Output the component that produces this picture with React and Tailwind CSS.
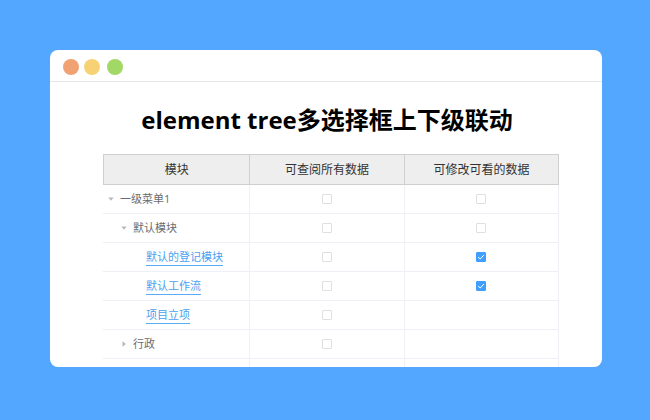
import { useState } from 'react';

const COLUMNS = ['模块', '可查阅所有数据', '可修改可看的数据'];

const INDENTS = ['pl-[5px]', 'pl-[18px]', 'pl-[31px]'];

const ROWS = [
  { id: 'menu', label: '一级菜单1', level: 0, caret: 'open', view: false, edit: false },
  { id: 'default', label: '默认模块', level: 1, caret: 'open', view: false, edit: false },
  { id: 'register', label: '默认的登记模块', level: 2, view: false, edit: true },
  { id: 'workflow', label: '默认工作流', level: 2, view: false, edit: true },
  { id: 'project', label: '项目立项', level: 2, view: false },
  { id: 'admin', label: '行政', level: 1, caret: 'closed', view: false },
];

function Caret({ open, label }) {
  return (
    <button className="flex w-3 shrink-0 cursor-pointer items-center" aria-label={label} aria-expanded={open}>
      <svg viewBox="0 0 6 6" className="size-[6px] fill-[#b4b8c0]">
        {open ? <path d="M0.3 1.5h5.4L3 4.8z" /> : <path d="M1.5 0.2v5.6L4.9 3z" />}
      </svg>
    </button>
  );
}

function Checkbox({ label, defaultChecked }) {
  const [checked, setChecked] = useState(defaultChecked);

  return (
    <label className="relative mx-auto block size-[10px] cursor-pointer">
      <input
        type="checkbox"
        checked={checked}
        onChange={(e) => setChecked(e.target.checked)}
        className="block size-[10px] cursor-pointer appearance-none rounded-[1px] border border-[#dfe0e4] bg-white checked:border-[#409eff] checked:bg-[#409eff]"
        aria-label={label}
      />
      {checked && (
        <svg viewBox="0 0 10 10" className="pointer-events-none absolute inset-0 size-[10px]" fill="none">
          <path d="M2.1 5 4.2 7 8 2.9" stroke="#fff" strokeWidth="1" />
        </svg>
      )}
    </label>
  );
}

function Row({ row }) {
  return (
    <tr className="h-[29px]">
      <td className="border-r border-b border-[#eef0f5]">
        <div className={`flex items-center ${INDENTS[row.level]}`}>
          {row.caret ? <Caret open={row.caret === 'open'} label={row.label} /> : <span className="w-3" />}
          {row.level === 2 ? (
            <a href="#" className="border-b border-[#5aabf5] leading-4 text-[#4a9ff0]">
              {row.label}
            </a>
          ) : (
            <span className="leading-4">{row.label}</span>
          )}
        </div>
      </td>
      <td className="border-r border-b border-[#eef0f5]">
        <Checkbox label={`${row.label} ${COLUMNS[1]}`} defaultChecked={row.view} />
      </td>
      <td className="border-r border-b border-[#eef0f5]">
        {row.edit !== undefined && (
          <Checkbox label={`${row.label} ${COLUMNS[2]}`} defaultChecked={row.edit} />
        )}
      </td>
    </tr>
  );
}

export default function App() {
  return (
    <div className="flex h-screen flex-col bg-[#54a7ff] pt-[50px] pr-12 pb-[53px] pl-[50px] font-['Open_Sans','Noto_Sans_CJK_SC',sans-serif]">
      <main className="min-h-0 flex-1 overflow-hidden rounded-lg bg-white">
        {/* Window bar */}
        <div className="flex h-8 items-center border-b border-[#e6e6e6] pt-[2px] pl-[13px]">
          <span className="mr-[5px] size-4 rounded-full bg-[#f0a273]" />
          <span className="mr-[7px] size-4 rounded-full bg-[#f7d274]" />
          <span className="size-4 rounded-full bg-[#a2d866]" />
        </div>

        <h1 className="mt-5 pl-[2px] text-center text-2xl leading-9 font-bold text-black">
          element tree多选择框上下级联动
        </h1>

        <div className="mt-4 pr-[43px] pl-[53px]">
          <table className="w-full table-fixed border-separate border-spacing-0 text-[11px] text-[#6a6c70]">
            <colgroup>
              <col className="w-[32.3%]" />
              <col className="w-[33.9%]" />
              <col />
            </colgroup>
            <thead>
              <tr className="h-[31px] bg-[#eeeeee] text-xs text-[#333333]">
                {COLUMNS.map((name) => (
                  <th
                    key={name}
                    className="border-y border-r border-[#cfcfcf] font-normal first:border-l"
                  >
                    {name}
                  </th>
                ))}
              </tr>
            </thead>
            <tbody>
              {ROWS.map((row) => (
                <Row key={row.id} row={row} />
              ))}
              {/* Next row, cut off by the window edge */}
              <tr className="h-[29px]">
                <td className="border-r border-[#eef0f5]" />
                <td className="border-r border-[#eef0f5]" />
                <td className="border-r border-[#eef0f5]" />
              </tr>
            </tbody>
          </table>
        </div>
      </main>
    </div>
  );
}
